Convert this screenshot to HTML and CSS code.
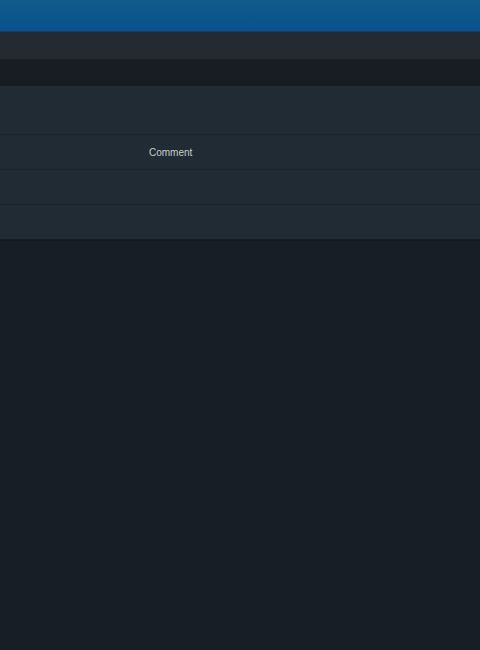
FILE: index.html
```html
<!DOCTYPE html>
<html lang="en">

<head>
    <meta charset="UTF-8">
    <meta name="viewport" content="width=device-width, initial-scale=1.0">
    <title>Comment</title>
    <link rel="stylesheet" href="styles.css">
</head>

<body>
    <header class="topbar"></header>
    <nav class="subbar"></nav>
    <div class="tabs"></div>
    <div class="panel">
        <div class="row first"></div>
        <div class="row">
            <span class="label">Comment</span>
        </div>
        <div class="row"></div>
        <div class="row last"></div>
    </div>
</body>

</html>
```

FILE: styles.css
```css
* {
    box-sizing: border-box;
}

body {
    margin: 0;
    height: 650px;
    background-color: #181e25;
    font-family: "Liberation Sans", Arial, sans-serif;
}

.topbar {
    height: 32px;
    background: linear-gradient(#0f5b89, #0b528e);
    border-bottom: 1px solid #1b3a55;
}

.subbar {
    height: 28px;
    background-color: #232a31;
    border-bottom: 1px solid #1a1f25;
}

.tabs {
    height: 26px;
    background-color: #181d24;
}

.panel {
    background-color: #212b34;
    border-bottom: 2px solid #151a20;
}

.row {
    display: flex;
    align-items: center;
    height: 35px;
    border-bottom: 1px solid #1c242b;
}

.row.first {
    height: 49px;
}

.row.last {
    height: 34px;
    border-bottom: none;
}

.label {
    margin-left: 149px;
    font-size: 10px;
    color: #c9cdd1;
}
```
